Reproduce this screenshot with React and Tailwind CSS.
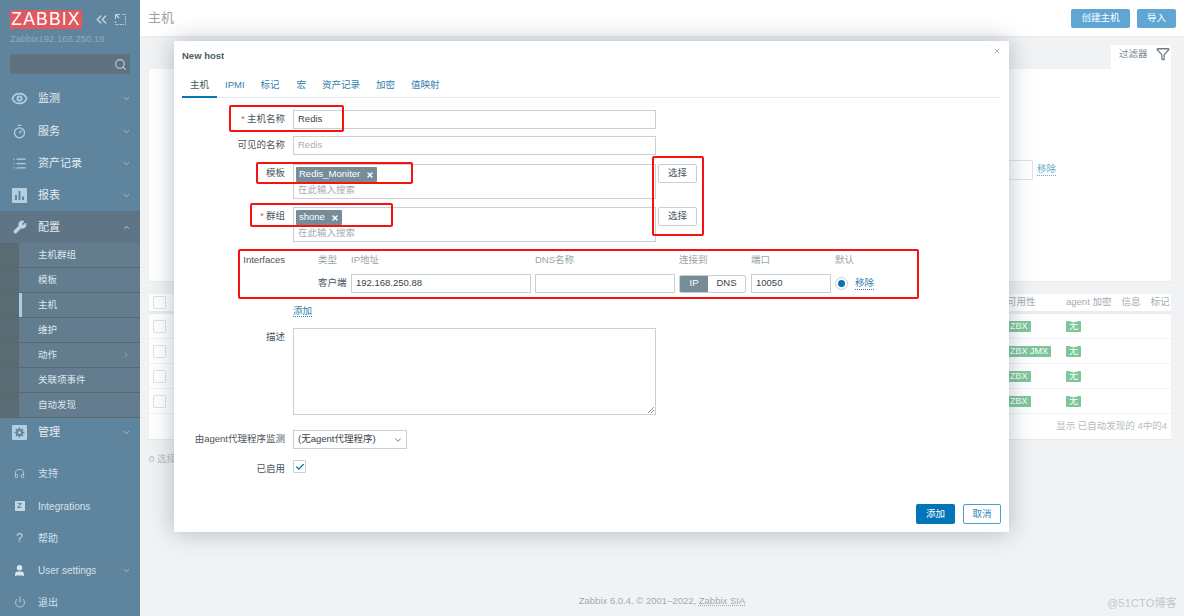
import React from "react";
import { Eye, Timer, List, Wrench, Headphones, User, Power, Search, ChevronDown, ChevronUp, ChevronRight, ChevronsLeft, Filter, Check, X } from "lucide-react";

const FONT = { fontFamily: '"Liberation Sans","Noto Sans CJK SC",sans-serif' };

function BarsIcon() {
  return (
    <svg width="15" height="15" viewBox="0 0 15 15">
      <rect width="15" height="15" rx="1" fill="#b4cfe0" />
      <rect x="3" y="7" width="2" height="5" fill="#5f859e" />
      <rect x="6.5" y="3" width="2" height="9" fill="#5f859e" />
      <rect x="10" y="8.5" width="2" height="3.5" fill="#5f859e" />
    </svg>
  );
}
function GearIcon() {
  return (
    <svg width="15" height="15" viewBox="0 0 15 15">
      <rect width="15" height="15" rx="1" fill="#b4cfe0" />
      <circle cx="7.5" cy="7.5" r="3.6" fill="#5f859e" />
      <path d="M7.5 2.5v10M2.5 7.5h10M4 4l7 7M11 4l-7 7" stroke="#5f859e" strokeWidth="1.6" />
      <circle cx="7.5" cy="7.5" r="1.5" fill="#b4cfe0" />
    </svg>
  );
}
function ZIcon() {
  return (
    <div className="w-[10px] h-[10px] bg-[#c3d6e3] flex items-center justify-center text-[8px] font-bold text-[#5f859e] leading-none">Z</div>
  );
}
function CornerIcon() {
  return (
    <svg width="11" height="11" viewBox="0 0 11 11" fill="none" stroke="#c4d5e0">
      <path d="M0.5 5V0.5H5" strokeWidth="1" />
      <path d="M7 0.5h3.5v10H0.5V7" strokeDasharray="1.5 1" strokeWidth="1" />
      <path d="M1 1l3 3" strokeWidth="1.2" />
    </svg>
  );
}

function NavItem({ icon, label, chev, h = "h-8", active, small }) {
  return (
    <div className={`${h} shrink-0 flex items-center ${active ? "bg-[#5f7585]" : ""}`}>
      <div className="w-[38px] flex justify-center text-[#b4cfe0] pl-[1px]">{icon}</div>
      <span className={`flex-1 ${small ? "text-[10px] text-[#d3e0e9]" : "text-[11px] text-[#e3ebf0]"}`}>{label}</span>
      {chev === "down" && <ChevronDown size={9} className="text-[#b4cfe0] mr-[9px]" />}
      {chev === "up" && <ChevronUp size={9} className="text-[#d5e2ea] mr-[9px]" />}
    </div>
  );
}

function SubItem({ label, active, arrow }) {
  return (
    <div className="h-[25px] flex items-center pl-[19px] border-b border-[#57696f] bg-[#5a6b73]">
      <div className={`h-full flex-1 flex items-center bg-[#637d8f] ${active ? "border-l-[3px] border-[#a5cfe8] pl-[16px]" : "pl-[19px]"}`}>
        <span className="flex-1 text-[9.5px] text-[#dde6ec]">{label}</span>
        {arrow && <ChevronRight size={8} className="text-[#a9bfce] mr-[10px]" />}
      </div>
    </div>
  );
}

function Sidebar() {
  return (
    <aside className="w-[140px] h-[616px] shrink-0 bg-[#5f859e] flex flex-col">
      <div className="h-[82px] shrink-0 px-[10px] pt-[10px]">
        <div className="flex items-center">
          <div className="w-[72px] h-[19px] bg-[#df5a60] text-white text-[17.5px] leading-[19px] text-center tracking-[1.2px]">ZABBIX</div>
          <ChevronsLeft size={17} className="text-[#c4d5e0] ml-[11px]" />
          <div className="ml-[5px]"><CornerIcon /></div>
        </div>
        <div className="text-[9.5px] text-[#8fabbd] mt-[4px] leading-[12px]">Zabbix192.168.250.18</div>
        <div className="mt-[9px] h-[20px] w-[120px] rounded-[2px] bg-[#5e7280] flex items-center justify-end pr-[3px]">
          <Search size={13} className="text-[#c3d2dc]" />
        </div>
      </div>
      <NavItem icon={<Eye size={17} strokeWidth={2.4} />} label="监测" chev="down" h="h-[33px]" />
      <NavItem icon={<Timer size={15} />} label="服务" chev="down" />
      <NavItem icon={<List size={15} />} label="资产记录" chev="down" />
      <NavItem icon={<BarsIcon />} label="报表" chev="down" />
      <NavItem icon={<Wrench size={14} fill="#c4d9e6" />} label="配置" chev="up" active h="h-[32px]" />
      <div className="shrink-0">
        <SubItem label="主机群组" />
        <SubItem label="模板" />
        <SubItem label="主机" active />
        <SubItem label="维护" />
        <SubItem label="动作" arrow />
        <SubItem label="关联项事件" />
        <SubItem label="自动发现" />
      </div>
      <NavItem icon={<GearIcon />} label="管理" chev="down" h="h-[29px]" />
      <div className="h-[10px] shrink-0" />
      <NavItem icon={<Headphones size={11} />} label="支持" small h="h-[33px]" />
      <NavItem icon={<ZIcon />} label="Integrations" small h="h-[32px]" />
      <NavItem icon={<span className="text-[12px] text-[#c4d9e6]">?</span>} label="帮助" small h="h-[32px]" />
      <NavItem icon={<User size={13} fill="#dbe7ee" className="text-[#dbe7ee]" />} label="User settings" chev="down" small h="h-[32px]" />
      <NavItem icon={<Power size={12} />} label="退出" small h="h-[32px]" />
    </aside>
  );
}

function BgRow({ zbx = "ZBX" }) {
  return (
    <div className="h-[25px] flex items-center border-b border-[#f0f2f4]">
      <div className="w-[13px] h-[13px] ml-[4px] border border-[#dfe3e6] rounded-[1px]" />
      <div className="flex-1" />
      <div className="w-[59px] h-[11px] flex items-center">
        <span className="bg-[#7cc79a] text-white text-[9px] leading-[11px] px-[3px] rounded-[1px] whitespace-nowrap">{zbx}</span>
      </div>
      <div className="w-[105px] h-[11px] flex items-center">
        <span className="bg-[#7cc79a] text-white text-[9px] leading-[11px] px-[3px] rounded-[1px]">无</span>
      </div>
    </div>
  );
}

function Main() {
  return (
    <main className="flex-1 h-[616px] flex flex-col bg-[#f0f2f4]">
      <header className="h-[37px] shrink-0 bg-white border-b border-[#e9ecee] flex items-center pl-[8px] pr-[8px]">
        <h1 className="flex-1 text-[13px] font-normal text-[#9aa4aa]">主机</h1>
        <div className="w-[59px] h-[19px] bg-[#5ea6d3] text-white text-[9.5px] rounded-[2px] flex items-center justify-center">创建主机</div>
        <div className="w-[39px] h-[19px] bg-[#5ea6d3] text-white text-[9.5px] rounded-[2px] flex items-center justify-center ml-[7px]">导入</div>
      </header>
      <div className="flex-1 pl-[9px] pr-[13px] pt-[8px] flex flex-col">
        <div className="flex justify-end">
          <div className="w-[60px] h-[24px] bg-white flex items-center pl-[8px] pb-[6px] gap-[8px] text-[9.5px] text-[#7b8890]">
            <span>过滤器</span>
            <Filter size={14} strokeWidth={2.2} className="text-[#6f7b83]" />
          </div>
        </div>
        <div className="h-[213px] bg-white border-b border-[#e9ecee]" />
        <div className="mt-[12px] h-[146px] bg-white border-b border-[#e6e9eb] flex flex-col">
          <div className="h-[20px] flex items-center border-b-[3px] border-[#eaedef] text-[9.5px] text-[#a2acb2] whitespace-nowrap">
            <div className="w-[13px] h-[13px] ml-[4px] border border-[#dfe3e6] rounded-[1px]" />
            <div className="flex-1" />
            <span className="w-[59px]">可用性</span>
            <span className="w-[105px] flex gap-[10px]">
              <span>agent 加密</span><span>信息</span><span>标记</span>
            </span>
          </div>
          <BgRow />
          <BgRow zbx="ZBX  JMX" />
          <BgRow />
          <BgRow />
          <div className="flex-1 flex items-center justify-end pr-[4px] text-[9.5px] text-[#b4bcc1]">显示 已自动发现的 4中的4</div>
        </div>
        <div className="mt-[12px] text-[9.5px] text-[#b4bcc1]">0 选择</div>
        <div className="flex-1" />
        <footer className="h-[30px] flex items-center justify-center text-[9.5px] text-[#a3abb1] pl-[4px]">
          Zabbix 6.0.4. © 2001–2022,&nbsp;<span className="underline decoration-dotted">Zabbix SIA</span>
        </footer>
      </div>
    </main>
  );
}

const inputCls = "h-[19px] border border-[#c8d0d5] bg-white px-[4px] flex items-center text-[9.5px] text-[#39434a]";

function Label({ children, req }) {
  return (
    <div className="w-[103px] shrink-0 text-right text-[9.5px] text-[#4a555c] pt-[3px] leading-[12px]">
      {req && <span className="text-[#e25b60] mr-[2px]">*</span>}
      {children}
    </div>
  );
}

function Tag({ children }) {
  return (
    <div className="h-[15px] bg-[#768d99] text-white text-[9.5px] rounded-[1px] flex items-center pl-[3px] pr-[3px] gap-[6px] w-fit font-medium">
      <span>{children}</span>
      <X size={8} strokeWidth={4} />
    </div>
  );
}

function MultiRow({ label, req, tag, mb }) {
  return (
    <div className={`flex ${mb}`}>
      <Label req={req}>{label}</Label>
      <div className="ml-[8px] w-[363px] h-[35px] border border-[#c8d0d5] pl-[2px] pt-[2px]">
        <Tag>{tag}</Tag>
        <div className="text-[9.5px] text-[#a4adb3] pl-[2px] leading-[12px] mt-[2px]">在此输入搜索</div>
      </div>
      <div className="ml-[2px] w-[39px] h-[19px] border border-[#c8d0d5] rounded-[2px] flex items-center justify-center text-[9.5px] text-[#4a555c]">选择</div>
    </div>
  );
}

function RedBox({ className }) {
  return <div className={`absolute border-[2px] border-[#f5130f] rounded-[2px] pointer-events-none ${className}`} />;
}

function Modal() {
  return (
    <div className="absolute left-[174px] top-[41px] w-[835px] h-[491px] bg-white shadow-[0_0_22px_rgba(70,90,105,0.38)] flex flex-col px-[8px]">
      <div className="h-[34px] shrink-0 pt-[9px] text-[9.5px] font-bold leading-[12px] text-[#4f5b63] flex justify-between">
        <span>New host</span>
        <X size={8} strokeWidth={3} className="text-[#a9b2b8] mt-[-3px]" />
      </div>
      <div className="h-[23px] shrink-0 border-b border-[#e9ecee] flex text-[9.5px] text-[#2f7faa] gap-[16px]">
        <span className="w-[35px] h-[23px] border-b-2 border-[#0275b8] text-center text-[#4a555c] mr-[-8px] pt-[3px]">主机</span>
        <span className="pt-[3px]">IPMI</span>
        <span className="pt-[3px]">标记</span>
        <span className="pt-[3px] ml-[1px]">宏</span>
        <span className="pt-[3px]">资产记录</span>
        <span className="pt-[3px]">加密</span>
        <span className="pt-[3px]">值映射</span>
      </div>
      <div className="h-[12px] shrink-0" />
      <div className="flex mb-[7px]">
        <Label req>主机名称</Label>
        <div className={`${inputCls} ml-[8px] w-[363px]`}>Redis</div>
      </div>
      <div className="flex mb-[9px]">
        <Label>可见的名称</Label>
        <div className={`${inputCls} ml-[8px] w-[363px] text-[#a4adb3]`}>Redis</div>
      </div>
      <MultiRow label="模板" tag="Redis_Moniter" mb="mb-[8px]" />
      <MultiRow label="群组" req tag="shone" mb="mb-[11px]" />
      <div className="flex mb-[12px]">
        <div className="w-[103px] shrink-0 text-right text-[9.5px] text-[#4a555c] leading-[12px] pt-[1px]">Interfaces</div>
        <div className="ml-[8px] grid grid-cols-[54px_180px_140px_68px_80px_auto] gap-x-[4px] text-[9.5px] items-center">
          <div className="h-[14px] pl-[25px] text-[#9aa4aa] leading-[14px] mb-[7px] whitespace-nowrap">类型</div>
          <div className="h-[14px] text-[#9aa4aa] leading-[14px] mb-[7px]">IP地址</div>
          <div className="h-[14px] text-[#9aa4aa] leading-[14px] mb-[7px]">DNS名称</div>
          <div className="h-[14px] text-[#9aa4aa] leading-[14px] mb-[7px]">连接到</div>
          <div className="h-[14px] text-[#9aa4aa] leading-[14px] mb-[7px]">端口</div>
          <div className="h-[14px] text-[#9aa4aa] leading-[14px] mb-[7px]">默认</div>
          <div className="pl-[25px] text-[#4a555c] whitespace-nowrap">客户端</div>
          <div className={inputCls}>192.168.250.88</div>
          <div className={inputCls}></div>
          <div className="h-[18px] w-[67px] flex border border-[#c8d0d5] rounded-[2px] overflow-hidden">
            <div className="w-[28px] bg-[#768d99] text-white flex items-center justify-center">IP</div>
            <div className="flex-1 flex items-center justify-center text-[#39434a]">DNS</div>
          </div>
          <div className={inputCls}>10050</div>
          <div className="flex items-center">
            <div className="w-[13px] h-[13px] rounded-full border border-[#c8d0d5] flex items-center justify-center">
              <div className="w-[7px] h-[7px] rounded-full bg-[#0275b8]" />
            </div>
            <span className="ml-[7px] text-[#2f7faa] border-b border-dotted border-[#2f7faa] leading-[12px]">移除</span>
          </div>
        </div>
      </div>
      <div className="ml-[111px] h-[13px] mb-[10px] text-[9.5px] text-[#2f7faa] leading-[12px]">
        <span className="border-b border-dotted border-[#2f7faa]">添加</span>
      </div>
      <div className="flex mb-[15px]">
        <Label>描述</Label>
        <div className="ml-[8px] w-[363px] h-[87px] border border-[#c8d0d5] relative">
          <svg className="absolute right-[1px] bottom-[1px]" width="7" height="7" viewBox="0 0 7 7" stroke="#8a949a"><path d="M1 7L7 1M4 7l3-3" /></svg>
        </div>
      </div>
      <div className="flex mb-[11px]">
        <Label>由agent代理程序监测</Label>
        <div className={`${inputCls} ml-[8px] w-[114px] justify-between pr-[3px]`}>
          <span>(无agent代理程序)</span>
          <ChevronDown size={10} className="text-[#5a656c]" />
        </div>
      </div>
      <div className="flex">
        <Label>已启用</Label>
        <div className="ml-[8px] w-[13px] h-[13px] border border-[#c8d0d5] rounded-[1px] flex items-center justify-center">
          <Check size={10} strokeWidth={3} className="text-[#0275b8]" />
        </div>
      </div>
      <div className="flex-1" />
      <div className="flex justify-end gap-[8px] pb-[8px]">
        <div className="w-[39px] h-[20px] bg-[#0275b8] text-white text-[9.5px] rounded-[2px] flex items-center justify-center">添加</div>
        <div className="w-[38px] h-[20px] border border-[#4d9ccb] text-[#2f84b8] text-[9.5px] rounded-[2px] flex items-center justify-center">取消</div>
      </div>
      <RedBox className="left-[55px] top-[64px] w-[115px] h-[27px]" />
      <RedBox className="left-[82px] top-[121px] w-[157px] h-[22px]" />
      <RedBox className="left-[76px] top-[162px] w-[143px] h-[24px]" />
      <RedBox className="left-[478px] top-[115px] w-[52px] h-[80px]" />
      <RedBox className="left-[64px] top-[208px] w-[681px] h-[50px]" />
    </div>
  );
}

export default function App() {
  return (
    <div className="relative w-[1184px] h-[616px] overflow-hidden flex bg-[#f0f2f4]" style={FONT}>
      <Sidebar />
      <Main />
      <div className="absolute left-[1037px] top-[163px] text-[9.5px] text-[#6ba6c9] border-b border-dotted border-[#6ba6c9] leading-[12px]">移除</div>
      <div className="absolute left-[1005px] top-[160px] w-[28px] h-[20px] border border-[#dfe3e6] rounded-[1px]" />
      <Modal />
      <div className="absolute right-[7px] bottom-[5px] text-[11px] text-[#c4c8cb] tracking-[0.2px]">@51CTO博客</div>
    </div>
  );
}
